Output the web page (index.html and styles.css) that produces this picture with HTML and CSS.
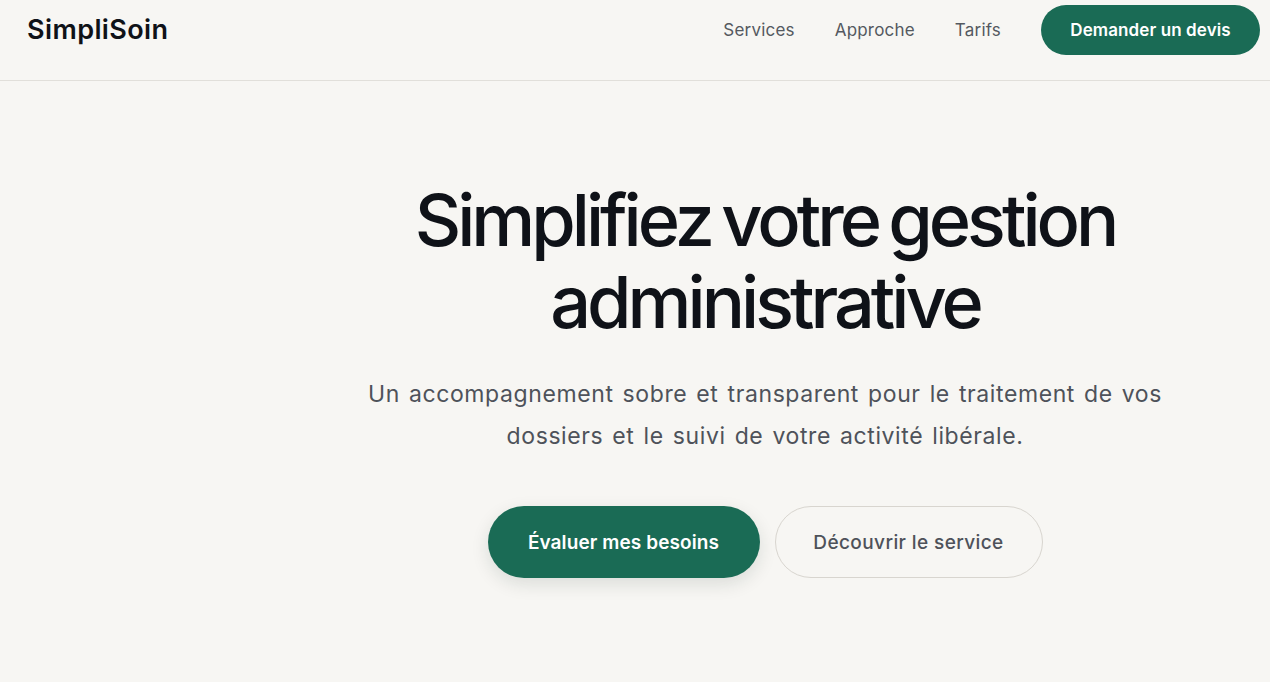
FILE: index.html
```html
<!DOCTYPE html>
<html lang="fr">
<head>
<meta charset="utf-8">
<title>SimpliSoin</title>
<link rel="stylesheet" href="styles.css">
</head>
<body>
<header class="site-header">
  <div class="logo">SimpliSoin</div>
  <nav class="nav">
    <a class="nav-link" href="#">Services</a>
    <a class="nav-link" href="#">Approche</a>
    <a class="nav-link" href="#">Tarifs</a>
    <a class="btn-header" href="#">Demander un devis</a>
  </nav>
</header>
<main class="hero">
  <div class="hero-inner">
    <h1 class="hero-title">Simplifiez votre gestion administrative</h1>
    <p class="hero-sub">Un accompagnement sobre et transparent pour le traitement de vos dossiers et le suivi de votre activité libérale.</p>
    <div class="hero-actions">
      <a class="btn btn-primary" href="#">Évaluer mes besoins</a>
      <a class="btn btn-secondary" href="#">Découvrir le service</a>
    </div>
  </div>
</main>
</body>
</html>
```
FILE: styles.css
```css
* { box-sizing: border-box; }
html, body { margin: 0; padding: 0; }
body {
  background: #f7f6f3;
  font-family: Inter, "Noto Sans", sans-serif;
  color: #0f1218;
  height: 682px;
  overflow: hidden;
}
a { text-decoration: none; }
.site-header {
  height: 81px;
  border-bottom: 1px solid #e1dfda;
  display: flex;
  justify-content: space-between;
  align-items: flex-start;
  padding: 5px 10px 0 27px;
}
.logo {
  font-size: 27px;
  font-weight: 600;
  letter-spacing: 0.4px;
  line-height: 50px;
  color: #0f1218;
}
.nav {
  display: flex;
  align-items: center;
  height: 50px;
}
.nav-link {
  color: #545960;
  font-size: 17px;
  margin-right: 40px;
  letter-spacing: 0.2px;
}
.btn-header {
  background: #1a6b55;
  color: #fff;
  font-size: 17px;
  font-weight: 600;
  height: 50px;
  width: 219px;
  border-radius: 25px;
  display: flex;
  align-items: center;
  justify-content: center;
  letter-spacing: 0.1px;
}
.hero {
  padding-left: 260px;
}
.hero-inner {
  display: flex;
  flex-direction: column;
  align-items: center;
  text-align: center;
  padding-top: 98px;
}
.hero-title {
  margin: 0;
  font-size: 72px;
  font-weight: 500;
  line-height: 82px;
  letter-spacing: -4px;
  word-spacing: -5px;
  max-width: 760px;
  color: #0f1218;
}
.hero-sub {
  margin: 30px 0 0;
  font-size: 23px;
  line-height: 42px;
  color: #4e525a;
  max-width: 830px;
  letter-spacing: 0.6px;
  word-spacing: 2px;
}
.hero-actions {
  display: flex;
  gap: 15px;
  margin-top: 49px;
}
.btn {
  height: 72px;
  border-radius: 36px;
  display: flex;
  align-items: center;
  justify-content: center;
  font-size: 19px;
  letter-spacing: 0.1px;
}
.btn-primary {
  width: 272px;
  background: #1a6b55;
  color: #fff;
  font-weight: 600;
  box-shadow: 0 6px 18px rgba(20, 40, 30, 0.12);
}
.btn-secondary {
  width: 268px;
  border: 1px solid #d8d5cf;
  color: #4e525a;
  font-weight: 500;
  letter-spacing: 0.4px;
}
```
